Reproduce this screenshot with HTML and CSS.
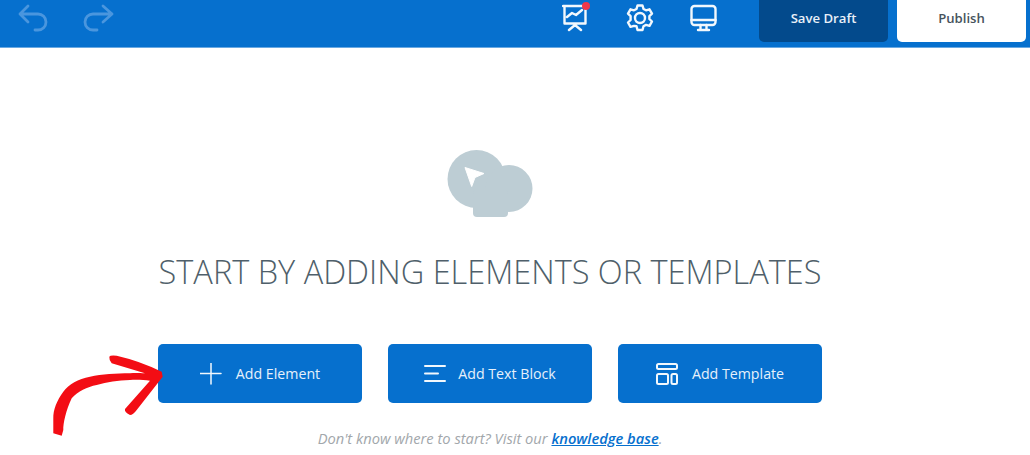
FILE: index.html
```html
<!DOCTYPE html>
<html lang="en">
<head>
<meta charset="utf-8">
<title>Builder</title>
<link rel="stylesheet" href="styles.css">
</head>
<body>
<header class="topbar">
  <div class="history">
    <svg class="icon-history" viewBox="0 0 30 26"><path d="M9 1 1 9l8 8M1 9h18a8 8 0 0 1 0 16h-3"/></svg>
    <svg class="icon-history" viewBox="0 0 30 26"><path d="M19 1l9 8-9 8M28 9H9a8 8 0 0 0 0 16h4"/></svg>
  </div>
  <div class="tools">
    <span class="tool">
      <svg class="icon-tool" viewBox="0 0 28 30"><path d="M1 3h24M2.500 3v17.500h21V3M13 20.500V22M7 27l6-5 6 5M5 14l5-4 4 2 6-5"/></svg>
      <i class="dot"></i>
    </span>
    <svg class="icon-tool" viewBox="0 0 28 30"><circle cx="14" cy="15" r="5"/><path d="M11.500 2.500h5l1 3.500 2.500 1.300 3.500-1 2.500 4.400-2.600 2.500v2.800l2.600 2.500-2.500 4.400-3.500-1-2.500 1.300-1 3.800h-5l-1-3.800L8 22.900l-3.500 1L2 19.500l2.600-2.500v-3.800L2 10.700l2.500-4.400 3.500 1L10.500 6z"/></svg>
    <svg class="icon-tool" viewBox="0 0 28 30"><rect x="1.500" y="3" width="24" height="19" rx="3"/><path d="M1.500 17h24M10.500 22v5M16.500 22v5M8 27h11"/></svg>
  </div>
  <div class="actions">
    <button class="btn-top btn-draft">Save Draft</button>
    <button class="btn-top btn-publish">Publish</button>
  </div>
</header>
<main class="stage">
  <svg class="cloud" viewBox="0 0 86 67">
    <circle class="cloud-fill" cx="29.500" cy="29" r="29"/>
    <circle class="cloud-fill" cx="62" cy="38.500" r="23.500"/>
    <rect class="cloud-fill" x="26" y="40" width="35" height="27" rx="4"/>
    <path class="cloud-pointer" d="M18 17.500l19 6-9 4-3.300 9z"/>
  </svg>
  <h1 class="title">START BY ADDING ELEMENTS OR TEMPLATES</h1>
  <div class="choices">
    <a class="choice">
      <svg class="icon-choice" viewBox="0 0 22 22"><path d="M11 0v21M0 10.500h21"/></svg>
      <span>Add Element</span>
    </a>
    <a class="choice choice-tight">
      <svg class="icon-choice icon-strong" viewBox="0 0 22 22"><path d="M1 3h20M1 10.500h13M1 18h20"/></svg>
      <span>Add Text Block</span>
    </a>
    <a class="choice">
      <svg class="icon-choice icon-strong" viewBox="0 0 22 22"><rect x="1" y="1" width="20" height="5" rx="1.500"/><rect x="1" y="11" width="11" height="10" rx="1.500"/><rect x="15.500" y="11" width="5.500" height="10" rx="1.500"/></svg>
      <span>Add Template</span>
    </a>
  </div>
  <p class="hint">Don't know where to start? Visit our <a class="hint-link">knowledge base</a>.</p>
  <svg class="arrow" viewBox="0 0 116 90">
    <path d="M3.300 83.300 11.700 85.700 13.300 80C13 74 16 60 21.700 48.300 28 41 37 37 46.700 35 57 32 68 30.500 80 30 87 29.500 94 30 100 30.700L75 59Q74 62 80 65 83 65 86.700 60L112.700 26.700 111.700 21.700Q90 11 66.700 5.700 60 5 59.300 6.700 59 10 61.700 13.300L95 23.300C88 23 84 23 80 23.300 66 23.500 52 24 40 26.700 28 29 19 34 13.300 41.700 7 50 3 60 3.300 68.300z"/>
  </svg>
</main>
</body>
</html>
```
FILE: styles.css
```css
* { box-sizing: border-box; }
html, body { margin: 0; padding: 0; }
body {
  width: 1030px;
  height: 455px;
  overflow: hidden;
  background: #fff;
  font-family: "Open Sans", "Noto Sans", sans-serif;
}
.topbar {
  height: 48px;
  display: flex;
  align-items: flex-start;
  background: #0670ce;
  border-bottom: 1px solid #6aa9e2;
}
.history {
  display: flex;
  gap: 35px;
  padding: 5px 0 0 19px;
}
.icon-history {
  width: 30px;
  height: 26px;
  fill: none;
  stroke: #4a96de;
  stroke-width: 2.800;
  stroke-linecap: round;
  stroke-linejoin: round;
  overflow: visible;
}
.tools {
  display: flex;
  gap: 36px;
  margin-left: 448px;
  padding-top: 3px;
}
.tool { position: relative; display: block; height: 30px; }
.icon-tool {
  display: block;
  width: 28px;
  height: 30px;
  fill: none;
  stroke: #f2f8fd;
  stroke-width: 2.400;
  stroke-linecap: round;
  stroke-linejoin: round;
}
.dot {
  position: absolute;
  top: -1px;
  right: 0;
  width: 8px;
  height: 8px;
  border-radius: 50%;
  background: #f0374a;
}
.actions {
  display: flex;
  gap: 9px;
  margin-left: 41px;
}
.btn-top {
  width: 129px;
  height: 42px;
  border: 0;
  border-radius: 0 0 5px 5px;
  font: 600 13.150px "Open Sans", "Noto Sans", sans-serif;
  padding: 0 0 6px;
}
.btn-draft { background: #034a8c; color: #e8f0f8; }
.btn-publish { background: #fff; color: #46525c; }
.stage {
  position: relative;
  height: 407px;
  width: 980px;
  display: flex;
  flex-direction: column;
  align-items: center;
  padding-top: 102px;
}
.cloud { width: 86px; height: 67px; display: block; }
.cloud-fill { fill: #bdcdd4; }
.cloud-pointer { fill: #fff; stroke: #fff; stroke-width: 1; stroke-linejoin: round; }
.title {
  margin: 34px 0 0;
  font-size: 32.500px;
  line-height: 42px;
  font-weight: 300;
  color: #4f5f6a;
  white-space: nowrap;
}
.choices {
  display: flex;
  gap: 26px;
  margin-top: 51px;
}
.choice {
  width: 204px;
  height: 59px;
  display: flex;
  align-items: center;
  justify-content: center;
  gap: 14px;
  background: #0670ce;
  border-radius: 5px;
  color: #e6f1fb;
  font-size: 14.200px;
}
.choice-tight { gap: 12px; }
.icon-choice {
  width: 22px;
  height: 22px;
  fill: none;
  stroke: #f2f8fd;
  stroke-width: 1.500;
  stroke-linecap: round;
}
.icon-strong { stroke-width: 2; }
.hint {
  margin: 26px 0 0;
  font-size: 14.700px;
  line-height: 19px;
  font-style: italic;
  color: #a2a7ab;
}
.hint-link {
  color: #0670ce;
  font-weight: 600;
  text-decoration: underline;
}
.arrow {
  position: absolute;
  left: 50px;
  top: 302px;
  width: 116px;
  height: 90px;
  fill: #f30d14;
}
```
